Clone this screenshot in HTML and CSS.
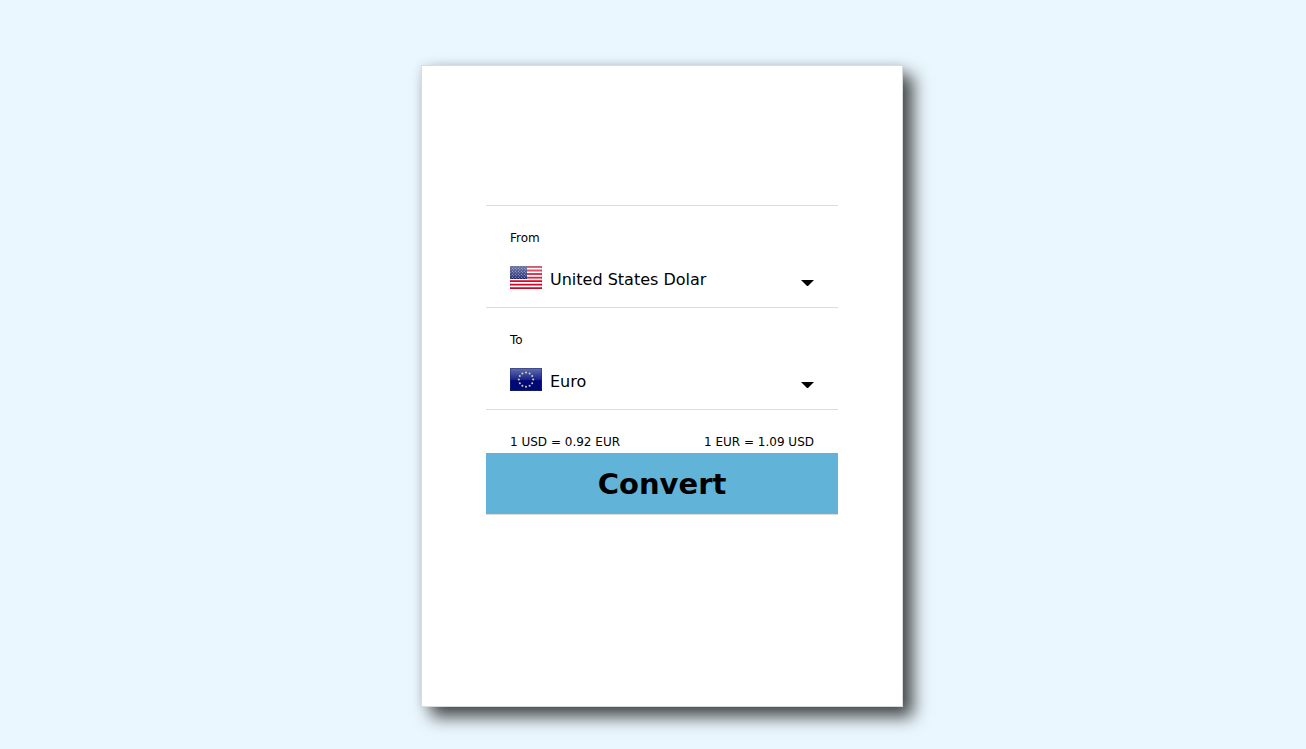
FILE: index.html
```html
<!DOCTYPE html>
<html lang="en">
<head>
<meta charset="utf-8">
<meta name="viewport" content="width=device-width, initial-scale=1">
<title>Currency converter</title>
<link rel="stylesheet" href="styles.css">
</head>
<body>
<main class="card">
  <form class="converter">
    <div class="field">
      <label class="field-label" for="from">From</label>
      <div class="picker">
        <svg class="flag" viewBox="0 0 32 24" aria-hidden="true">
          <defs>
            <linearGradient id="gloss" x1="0" y1="0" x2="0" y2="1">
              <stop offset="0" stop-color="#fff" stop-opacity=".4"/>
              <stop offset="1" stop-color="#fff" stop-opacity=".1"/>
            </linearGradient>
            <pattern id="stars" width="3" height="3" patternUnits="userSpaceOnUse">
              <circle cx=".8" cy=".8" r=".5" fill="#c5cbe8"/>
              <circle cx="2.3" cy="2.3" r=".5" fill="#c5cbe8"/>
            </pattern>
          </defs>
          <rect width="32" height="23" fill="#fff"/>
          <path d="M0 1h32M0 4.5h32M0 8h32M0 11.6h32M0 15.1h32M0 18.6h32M0 22.1h32" stroke="#d80824" stroke-width="1.9"/>
          <rect width="17" height="13" fill="#0c1866"/>
          <rect width="17" height="13" fill="url(#stars)"/>
          <rect width="32" height="12" fill="url(#gloss)"/>
          <rect x=".5" y=".5" width="31" height="22" fill="none" stroke="#30304a" stroke-opacity=".15"/>
        </svg>
        <select class="currency" id="from">
          <option selected>United States Dolar</option>
          <option>Euro</option>
        </select>
        <svg class="caret" viewBox="0 0 13 6" aria-hidden="true"><path d="M0 0h13L6.5 6.5z"/></svg>
      </div>
    </div>
    <div class="field">
      <label class="field-label" for="to">To</label>
      <div class="picker">
        <svg class="flag" viewBox="0 0 32 24" aria-hidden="true">
          <defs>
            <linearGradient id="night" x1="0" y1="0" x2="0" y2="1">
              <stop offset="0" stop-color="#6570b0"/>
              <stop offset=".5" stop-color="#18248a"/>
              <stop offset=".55" stop-color="#00087a"/>
              <stop offset="1" stop-color="#000a70"/>
            </linearGradient>
          </defs>
          <rect width="32" height="23" fill="url(#night)"/>
          <g fill="#d8d49a">
            <circle cx="16" cy="4.5" r="1"/><circle cx="19.6" cy="5.4" r="1"/><circle cx="22.2" cy="8" r="1"/>
            <circle cx="23.2" cy="11.6" r="1"/><circle cx="22.2" cy="15.2" r="1"/><circle cx="19.6" cy="17.8" r="1"/>
            <circle cx="16" cy="18.7" r="1"/><circle cx="12.4" cy="17.8" r="1"/><circle cx="9.8" cy="15.2" r="1"/>
            <circle cx="8.8" cy="11.6" r="1"/><circle cx="9.8" cy="8" r="1"/><circle cx="12.4" cy="5.4" r="1"/>
          </g>
          <rect x=".5" y=".5" width="31" height="22" fill="none" stroke="#222c66" stroke-opacity=".5"/>
        </svg>
        <select class="currency" id="to">
          <option>United States Dolar</option>
          <option selected>Euro</option>
        </select>
        <svg class="caret" viewBox="0 0 13 6" aria-hidden="true"><path d="M0 0h13L6.5 6.5z"/></svg>
      </div>
    </div>
    <div class="rates">
      <span>1 USD = 0.92 EUR</span>
      <span>1 EUR = 1.09 USD</span>
    </div>
    <button class="convert" type="button">Convert</button>
  </form>
</main>
</body>
</html>
```

FILE: styles.css
```css
* {
  box-sizing: border-box;
}

body {
  margin: 0;
  padding: 65px 0 40px 18px;
  background: #ebf7fe;
  color: #000;
  font-family: Verdana, "DejaVu Sans", sans-serif;
  font-size: 16px;
}

.card {
  max-width: 482px;
  margin: 0 auto;
  padding: 139px 64px 191px;
  border: 1px solid #d8dcde;
  background: #fff;
  box-shadow: 0 0 10px rgba(0, 0, 0, 0.1), 10px 10px 16px rgba(0, 0, 0, 0.7);
}

.converter {
  border-bottom: 1px solid #dcdcdc;
}

.field {
  padding: 24px 24px 17px;
  border-top: 1px solid #dcdcdc;
}

.field-label {
  display: block;
  margin-bottom: 20px;
  font-size: 12px;
  line-height: 16px;
}

.picker {
  position: relative;
  display: flex;
  gap: 8px;
  height: 24px;
}

.flag {
  flex: none;
  width: 32px;
  height: 24px;
}

.currency {
  flex: 1;
  min-width: 0;
  height: 24px;
  margin: 0;
  padding: 3px 16px 0 0;
  border: 0;
  background: transparent;
  color: inherit;
  font: inherit;
  appearance: none;
}

.caret {
  position: absolute;
  right: 0;
  bottom: 4px;
  width: 13px;
  height: 6px;
  pointer-events: none;
}

.rates {
  display: flex;
  justify-content: space-between;
  padding: 25px 24px 3px;
  border-top: 1px solid #dcdcdc;
  font-size: 12px;
  line-height: 15px;
}

.convert {
  display: block;
  width: 100%;
  padding: 13px 12px 11px;
  border: 0;
  background: #62b3d8;
  color: #000;
  font: bold 29px/37px Verdana, "DejaVu Sans", sans-serif;
}
```
